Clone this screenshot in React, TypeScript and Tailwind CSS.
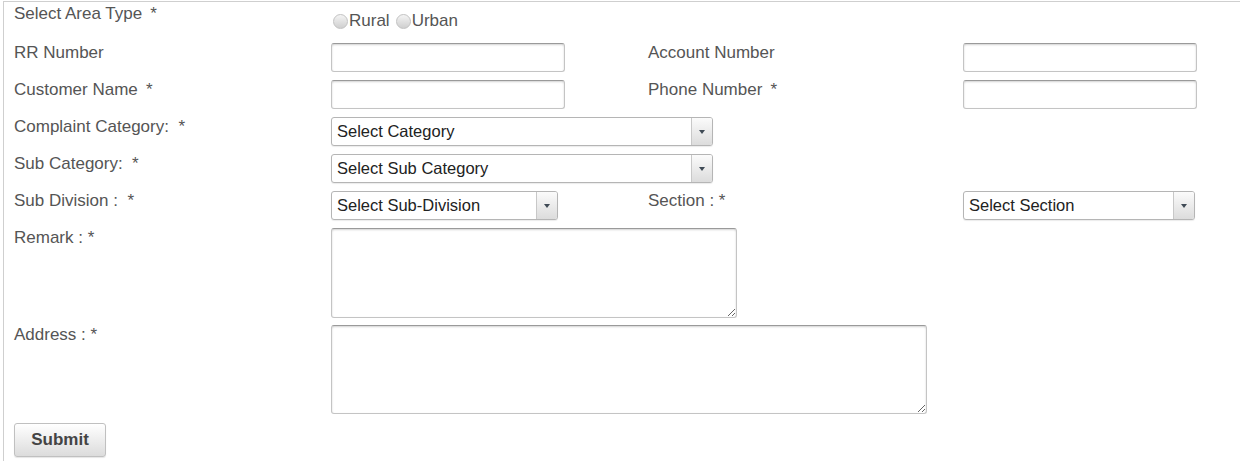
import React from "react";

const inputCls =
  "h-[29px] w-[234px] rounded-[3px] border border-[#c4c4c4] border-t-[#9a9a9a] bg-white shadow-[inset_0_1px_2px_rgba(0,0,0,0.18)] outline-none";

const Label = ({ children }: { children: React.ReactNode }) => (
  <div className="text-[17px] leading-[20px] text-[#555] whitespace-pre">{children}</div>
);

const FakeSelect = ({ text, width }: { text: string; width: string }) => (
  <div
    className={`flex h-[29px] items-stretch rounded-[3px] border border-[#b5b5b5] bg-white text-[16.5px] text-[#222] shadow-[0_1px_1px_rgba(0,0,0,0.08)] ${width}`}
  >
    <div className="flex flex-1 items-center pl-[5px]">{text}</div>
    <div className="flex w-[21px] items-center justify-center rounded-r-[2px] border-l border-[#c8c8c8] bg-linear-to-b from-[#fbfbfb] to-[#dcdcdc]">
      <span className="block h-0 w-0 border-l-[3px] border-r-[3px] border-t-[4px] border-l-transparent border-r-transparent border-t-[#3f4a55]" />
    </div>
  </div>
);

const Radio = ({ label }: { label: string }) => (
  <label className="flex items-center">
    <span className="mr-[1px] inline-block h-[15px] w-[15px] rounded-full border border-[#c2c2c2] bg-linear-to-b from-[#f4f4f4] to-[#cfcfcf]" />
    <span className="text-[17px] leading-[20px] text-[#555]">{label}</span>
  </label>
);

const row = "grid grid-cols-[317px_317px_315px_1fr] items-start";

export default function App() {
  return (
    <div className="min-h-screen bg-white" style={{ fontFamily: '"Liberation Sans", Arial, sans-serif' }}>
      <div className="ml-[3px] mt-[1px] flex flex-col gap-[8px] border-l border-t border-[#cfcfcf] pl-[10px] pb-[10px]">
        <div className={`${row} h-[33px]`}>
          <div className="pt-[2px]">
            <Label>{"Select Area Type \u2009*"}</Label>
          </div>
          <div className="flex gap-[6px] pl-[2px] pt-[9px]">
            <Radio label="Rural" />
            <Radio label="Urban" />
          </div>
        </div>

        <div className={row}>
          <Label>RR Number</Label>
          <input className={inputCls} />
          <Label>Account Number</Label>
          <input className={inputCls} />
        </div>

        <div className={row}>
          <Label>{"Customer Name \u2009*"}</Label>
          <input className={inputCls} />
          <Label>{"Phone Number \u2009*"}</Label>
          <input className={inputCls} />
        </div>

        <div className={row}>
          <Label>{"Complaint Category:  *"}</Label>
          <div className="col-span-3">
            <FakeSelect text="Select Category" width="w-[382px]" />
          </div>
        </div>

        <div className={row}>
          <Label>{"Sub Category:  *"}</Label>
          <div className="col-span-3">
            <FakeSelect text="Select Sub Category" width="w-[382px]" />
          </div>
        </div>

        <div className={row}>
          <Label>{"Sub Division :  *"}</Label>
          <FakeSelect text="Select Sub-Division" width="w-[227px]" />
          <Label>{"Section : *"}</Label>
          <FakeSelect text="Select Section" width="w-[232px]" />
        </div>

        <div className={row}>
          <Label>{"Remark : *"}</Label>
          <div className="col-span-3 flex">
            <textarea className="h-[90px] w-[406px] rounded-[3px] border border-[#c4c4c4] border-t-[#9a9a9a] shadow-[inset_0_1px_2px_rgba(0,0,0,0.18)] outline-none" />
          </div>
        </div>

        <div className={`${row} -mt-[1px]`}>
          <Label>{"Address : *"}</Label>
          <div className="col-span-3 flex">
            <textarea className="h-[89px] w-[596px] rounded-[3px] border border-[#c4c4c4] border-t-[#9a9a9a] shadow-[inset_0_1px_2px_rgba(0,0,0,0.18)] outline-none" />
          </div>
        </div>

        <div className="mt-[1px]">
          <button className="h-[34px] w-[92px] rounded-[3px] border border-[#c0c0c0] bg-linear-to-b from-[#ffffff] to-[#dcdcdc] text-[17px] font-bold text-[#444] shadow-[0_1px_1px_rgba(0,0,0,0.1)]">
            Submit
          </button>
        </div>
      </div>
    </div>
  );
}
